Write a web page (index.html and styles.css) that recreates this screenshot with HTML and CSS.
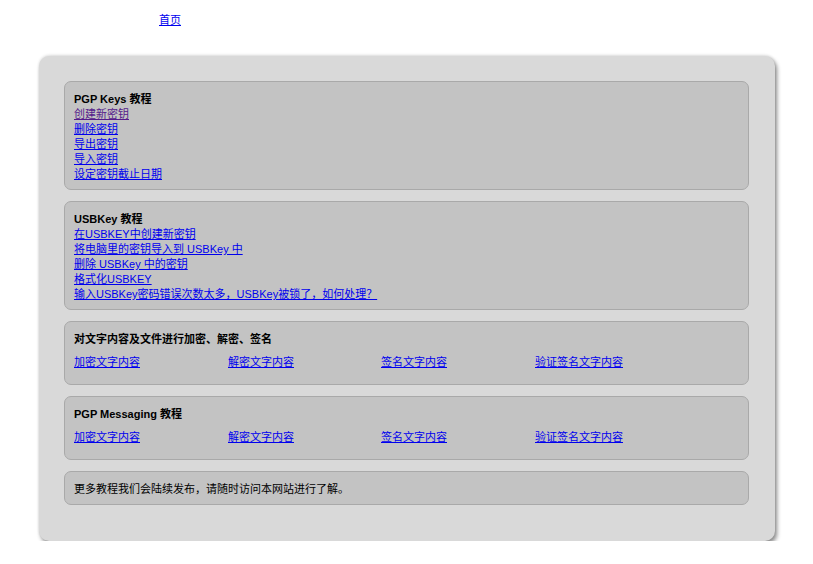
FILE: index.html
```html
<!DOCTYPE html>
<html lang="zh-CN">
<head>
<meta charset="utf-8">
<title>教程</title>
<link rel="stylesheet" href="styles.css">
</head>
<body>
<div class="nav"><a href="#">首页</a></div>
<div class="panel">
  <div class="box">
    <div class="title">PGP Keys 教程</div>
    <a class="visited" href="#">创建新密钥</a>
    <a href="#">删除密钥</a>
    <a href="#">导出密钥</a>
    <a href="#">导入密钥</a>
    <a href="#">设定密钥截止日期</a>
  </div>
  <div class="box">
    <div class="title">USBKey 教程</div>
    <a href="#">在USBKEY中创建新密钥</a>
    <a href="#">将电脑里的密钥导入到 USBKey 中</a>
    <a href="#">删除 USBKey 中的密钥</a>
    <a href="#">格式化USBKEY</a>
    <a href="#">输入USBKey密码错误次数太多，USBKey被锁了，如何处理？</a>
  </div>
  <div class="box">
    <div class="title">对文字内容及文件进行加密、解密、签名</div>
    <div class="row">
      <a href="#">加密文字内容</a>
      <a href="#">解密文字内容</a>
      <a href="#">签名文字内容</a>
      <a href="#">验证签名文字内容</a>
    </div>
  </div>
  <div class="box">
    <div class="title">PGP Messaging 教程</div>
    <div class="row">
      <a href="#">加密文字内容</a>
      <a href="#">解密文字内容</a>
      <a href="#">签名文字内容</a>
      <a href="#">验证签名文字内容</a>
    </div>
  </div>
  <div class="box">
    <div class="note">更多教程我们会陆续发布，请随时访问本网站进行了解。</div>
  </div>
</div>
</body>
</html>
```
FILE: styles.css
```css
html, body {
  margin: 0;
  padding: 0;
  background: #ffffff;
}
body {
  font-family: "Liberation Sans", Arial, "Noto Sans CJK SC", sans-serif;
  font-size: 11px;
  line-height: 15px;
  color: #000000;
}
a {
  color: #0000ee;
  text-decoration: underline;
}
a.visited {
  color: #551a8b;
}
.nav {
  padding: 13px 0 0 159px;
  height: 15px;
}
.panel {
  margin: 28px 0 0 39px;
  width: 736px;
  box-sizing: border-box;
  padding: 25px 26px 36px 25px;
  background: #d9d9d9;
  border-radius: 10px;
  box-shadow: 2px 3px 4px rgba(0, 0, 0, 0.45), 0 -1px 3px rgba(0, 0, 0, 0.12);
  display: flex;
  flex-direction: column;
  gap: 11px;
}
.box {
  background: #c3c3c3;
  border: 1px solid #a9a9a9;
  border-radius: 7px;
  padding: 10px 9px 7px 9px;
  display: flex;
  flex-direction: column;
  align-items: flex-start;
}
.title {
  font-weight: bold;
}
.row {
  display: grid;
  grid-template-columns: 154px 153px 154px auto;
  padding: 8px 0 7px 0;
  justify-items: start;
}
```
